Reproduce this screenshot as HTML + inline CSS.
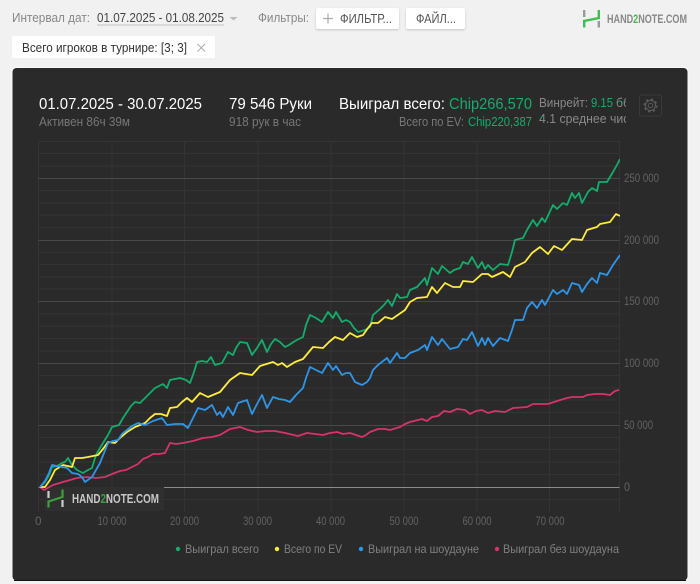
<!DOCTYPE html>
<html><head><meta charset="utf-8"><style>
html,body{margin:0;padding:0;width:700px;height:584px;overflow:hidden;background:#f1f1f1}
svg{display:block}
text{font-family:"Liberation Sans","Noto Sans CJK SC",sans-serif}
</style></head><body>
<svg width="700" height="584" viewBox="0 0 700 584" xmlns="http://www.w3.org/2000/svg">
<defs>
<filter id="s" x="-10%" y="-20%" width="120%" height="150%"><feDropShadow dx="0" dy="1" stdDeviation="1" flood-color="#000" flood-opacity=".18"/></filter>
<clipPath id="c1"><rect x="535" y="90" width="91" height="40"/></clipPath>
<clipPath id="c2"><rect x="30" y="135" width="590" height="380"/></clipPath>
</defs>
<rect width="700" height="584" fill="#f1f1f1"/>
<text x="12" y="22" font-size="13" fill="#888" textLength="78" lengthAdjust="spacingAndGlyphs">Интервал дат:</text>
<text x="97" y="22" font-size="13" fill="#444" textLength="127" lengthAdjust="spacingAndGlyphs">01.07.2025 - 01.08.2025</text>
<line x1="97" y1="25" x2="224" y2="25" stroke="#c4c4c4" stroke-width="1"/>
<path d="M229.500 17h8l-4 3.500z" fill="#bbb"/>
<text x="258" y="22" font-size="13" fill="#888" textLength="51" lengthAdjust="spacingAndGlyphs">Фильтры:</text>
<rect x="316" y="8" width="83" height="21" rx="2" fill="#fff" filter="url(#s)"/>
<path d="M328 13.500v10M323 18.500h10" stroke="#aaa" stroke-width="1.200"/>
<text x="340" y="23" font-size="13" fill="#555" textLength="52" lengthAdjust="spacingAndGlyphs">ФИЛЬТР...</text>
<rect x="406" y="8" width="59" height="21" rx="2" fill="#fff" filter="url(#s)"/>
<text x="416" y="23" font-size="13" fill="#555" textLength="40" lengthAdjust="spacingAndGlyphs">ФАЙЛ...</text>
<path d="M584.200 10v7M598.800 21v6.500" stroke="#999" stroke-width="2.400" fill="none"/>
<path d="M598.800 10v8l-14.600 3v6.500" stroke="#3fbf4f" stroke-width="2.400" fill="none"/>
<text x="607" y="23" font-size="11.500" font-weight="bold" fill="#888" textLength="80" lengthAdjust="spacingAndGlyphs">HAND<tspan fill="#4db54d">2</tspan>NOTE.COM</text>
<rect x="12" y="36" width="203" height="22" rx="2" fill="#fff"/>
<text x="22" y="52" font-size="13" fill="#333" textLength="165" lengthAdjust="spacingAndGlyphs">Всего игроков в турнире: [3; 3]</text>
<path d="M197.500 44l7.500 7.500M205 44l-7.500 7.500" stroke="#aaa" stroke-width="1"/>

<rect x="11.500" y="67" width="677" height="514.500" rx="4" fill="#fff" fill-opacity=".5"/>
<rect x="12.500" y="68" width="675" height="512.500" rx="4" fill="#2a2a2a"/>
<line x1="14" y1="580.500" x2="686" y2="580.500" stroke="#111" stroke-width="1"/>

<text x="39" y="109" font-size="16" fill="#fff" textLength="163" lengthAdjust="spacingAndGlyphs">01.07.2025 - 30.07.2025</text>
<text x="39" y="126" font-size="13" fill="#777" textLength="91" lengthAdjust="spacingAndGlyphs">Активен 86ч 39м</text>
<text x="229" y="109" font-size="16" fill="#fff" textLength="83" lengthAdjust="spacingAndGlyphs">79 546 Руки</text>
<text x="229" y="126" font-size="13" fill="#777" textLength="72" lengthAdjust="spacingAndGlyphs">918 рук в час</text>
<text x="339" y="109" font-size="16" fill="#fff" textLength="106" lengthAdjust="spacingAndGlyphs">Выиграл всего:</text>
<text x="449" y="109" font-size="16" fill="#14ad6c" textLength="83" lengthAdjust="spacingAndGlyphs">Chip266,570</text>
<text x="399" y="126" font-size="13" fill="#777" textLength="65" lengthAdjust="spacingAndGlyphs">Всего по EV:</text>
<text x="468" y="126" font-size="13" fill="#14ad6c" textLength="64" lengthAdjust="spacingAndGlyphs">Chip220,387</text>
<g clip-path="url(#c1)">
<text x="539" y="107" font-size="13" fill="#888" textLength="49" lengthAdjust="spacingAndGlyphs">Винрейт:</text>
<text x="591" y="107" font-size="13" fill="#14ad6c" textLength="22" lengthAdjust="spacingAndGlyphs">9.15</text>
<text x="616" y="107" font-size="13" fill="#888" textLength="14" lengthAdjust="spacingAndGlyphs">бб</text>
<text x="539" y="123" font-size="13" fill="#888" textLength="96" lengthAdjust="spacingAndGlyphs">4.1 среднее чист</text>
</g>
<rect x="639.500" y="95" width="22" height="21" rx="2" fill="none" stroke="#3a3a3a"/>
<circle cx="650.500" cy="105.500" r="2.300" fill="none" stroke="#5a5a5a" stroke-width="1"/>
<circle cx="650.500" cy="105.500" r="5" fill="none" stroke="#5a5a5a" stroke-width="1"/>
<circle cx="650.500" cy="105.500" r="6.200" fill="none" stroke="#5a5a5a" stroke-width="1.600" stroke-dasharray="2.400 2.470"/>

<g stroke="#343434" stroke-width="1" fill="none">
<path d="M38.500 141.500H619.500M38.500 153.500H619.500M38.500 166H619.500M38.500 190.500H619.500M38.500 203H619.500M38.500 215H619.500M38.500 227.500H619.500M38.500 252.500H619.500M38.500 264.500H619.500M38.500 277H619.500M38.500 289H619.500M38.500 314H619.500M38.500 326H619.500M38.500 338.500H619.500M38.500 351H619.500M38.500 375.500H619.500M38.500 388H619.500M38.500 400H619.500M38.500 412.500H619.500M38.500 437.500H619.500M38.500 449.500H619.500M38.500 462H619.500M38.500 474.500H619.500M38.500 499.500H619.500"/>
<path d="M38.500 141V511.500M112 141V511.500M184.500 141V511.500M258 141V511.500M331 141V511.500M404 141V511.500M477 141V511.500M549.500 141V511.500M619.500 141V511.500"/>
</g>
<g stroke="#484848" stroke-width="1" fill="none">
<path d="M38.500 178.500H619.500M38.500 240.500H619.500M38.500 301.500H619.500M38.500 363.500H619.500M38.500 425.500H619.500"/>
</g>
<path d="M38.500 487.500H619.500" stroke="#8a8a8a" stroke-width="1"/>

<rect x="45" y="487" width="119" height="24" fill="#2f2f2f"/>
<path d="M48.500 491v7M62.500 500v7" stroke="#ccc" stroke-width="2.200" fill="none"/>
<path d="M62.500 489.500v7.500l-14 4.500v6" stroke="#3f9f3f" stroke-width="2.200" fill="none"/>
<text x="72" y="503" font-size="12.500" font-weight="bold" fill="#c8c8c8" textLength="87" lengthAdjust="spacingAndGlyphs">HAND<tspan fill="#3f9f3f">2</tspan>NOTE.COM</text>

<g clip-path="url(#c2)" fill="none" stroke-width="1.800" stroke-linejoin="round">
<polyline stroke="#d6336c" points="40,487 44,490 53,485 63,482 70,480 77,478 87,477 96,478 105,477 112,474 120,471 126,470 132,467 138,464 143,459 148,457 153,454 159,454 165,453 168,447 170,443 176,444 183,443 193,441 203,438 212,437 220,435 225,432 230,429 240,427 248,430 257,432 266,431 275,431 285,433 298,436 307,433 315,434 323,435 330,433 337,432 343,434 350,433 356,435 362,437 366,435 370,432 378,429 385,429 390,430 400,427 405,424 410,422 422,419 427,421 432,417 438,416 444,411 450,412 457,409 465,410 470,414 476,411 482,410 488,413 495,411 505,412 513,408 527,407 533,404 548,404 557,401 567,398 572,397 583,397 587,395 595,394 603,394 610,395 615,391 619,390"/>
<polyline stroke="#14ad6c" points="40,487 45,482 49,475 52,467 57,466 62,463 65,462 68,458 72,465 77,470 83,473 88,470 92,468 95,458 97,453 103,443 108,435 112,427 119,425 123,418 127,412 131,406 135,402 140,403 145,398 150,393 155,388 163,384 167,388 170,380 180,378 186,380 190,383 194,372 197,362 202,361 207,362 211,357 215,365 222,363 228,352 233,355 236,348 240,342 247,343 252,355 257,348 262,340 267,352 271,344 275,339 280,342 285,347 289,345 295,341 303,337 306,325 310,315 316,318 322,322 328,312 333,318 336,312 342,322 346,320 350,322 354,328 358,332 365,330 370,327 373,315 380,309 384,305 388,300 392,306 397,294 400,298 407,297 410,290 417,287 425,278 427,285 432,268 438,274 442,266 450,273 454,270 460,268 463,262 468,264 472,257 478,268 482,262 485,269 488,265 493,270 500,264 508,265 512,252 515,240 523,238 527,230 533,220 537,226 542,218 545,222 553,205 557,209 563,203 567,205 572,193 575,198 579,193 582,203 588,192 592,188 597,191 599,182 607,182 613,172 618,163 620,159"/>
<polyline stroke="#ffec3d" points="40,487 45,487 50,480 55,470 63,465 72,467 75,458 82,458 88,457 98,455 103,449 108,442 115,443 121,437 127,432 135,427 145,423 150,418 155,414 161,414 167,416 170,408 177,407 182,402 187,398 192,402 200,393 208,397 220,392 225,386 230,380 240,373 252,375 260,366 273,362 278,365 282,363 287,367 295,362 303,359 308,353 313,347 323,348 329,342 335,337 343,340 350,333 357,337 363,335 368,328 372,323 378,323 385,317 392,319 405,310 410,302 417,298 427,297 432,287 437,293 445,283 453,287 460,287 463,281 473,282 482,274 488,274 492,277 503,272 510,277 515,267 525,262 532,253 540,247 548,254 554,246 562,250 572,239 582,240 587,230 597,227 600,224 610,222 616,214 620,216"/>
<polyline stroke="#2f95e8" points="40,487 45,481 49,473 52,465 57,466 62,467 67,468 72,473 78,474 82,477 85,482 92,477 96,470 100,463 104,453 108,443 113,441 118,440 122,434 127,430 132,426 138,423 145,425 153,421 162,418 167,425 175,424 183,424 188,428 193,418 198,408 205,410 212,405 217,415 220,412 223,417 228,407 233,415 238,403 247,400 252,414 257,404 262,395 267,408 273,397 279,399 285,400 290,402 296,395 303,388 306,378 310,367 316,370 322,373 328,363 333,370 336,366 342,375 346,373 350,373 355,382 362,385 367,382 370,378 373,370 378,365 387,358 390,363 397,353 400,358 405,358 410,353 418,350 425,345 427,350 432,337 438,345 442,339 450,349 458,347 463,339 467,340 472,332 478,346 482,338 485,345 488,338 493,346 500,338 508,341 512,330 515,320 523,320 527,308 532,302 537,308 542,300 545,305 553,290 557,294 563,290 567,294 572,283 579,285 582,292 587,284 592,278 597,283 600,273 607,275 613,265 620,255"/>
</g>

<g font-size="12" fill="#626262">
<text x="35" y="525" textLength="6.500" lengthAdjust="spacingAndGlyphs">0</text>
<text x="97.500" y="525" textLength="29" lengthAdjust="spacingAndGlyphs">10 000</text>
<text x="170" y="525" textLength="29" lengthAdjust="spacingAndGlyphs">20 000</text>
<text x="243" y="525" textLength="29" lengthAdjust="spacingAndGlyphs">30 000</text>
<text x="316" y="525" textLength="29" lengthAdjust="spacingAndGlyphs">40 000</text>
<text x="389.500" y="525" textLength="29" lengthAdjust="spacingAndGlyphs">50 000</text>
<text x="462.500" y="525" textLength="29" lengthAdjust="spacingAndGlyphs">60 000</text>
<text x="535.500" y="525" textLength="29" lengthAdjust="spacingAndGlyphs">70 000</text>
<text x="624" y="182" textLength="35" lengthAdjust="spacingAndGlyphs">250 000</text>
<text x="624" y="244" textLength="35" lengthAdjust="spacingAndGlyphs">200 000</text>
<text x="624" y="305" textLength="35" lengthAdjust="spacingAndGlyphs">150 000</text>
<text x="624" y="367" textLength="35" lengthAdjust="spacingAndGlyphs">100 000</text>
<text x="624" y="429" textLength="29" lengthAdjust="spacingAndGlyphs">50 000</text>
<text x="624" y="491" textLength="6" lengthAdjust="spacingAndGlyphs">0</text>
</g>

<circle cx="178" cy="549" r="2.200" fill="#14ad6c"/>
<circle cx="277" cy="549" r="2.200" fill="#ffec3d"/>
<circle cx="361" cy="549" r="2.200" fill="#2f95e8"/>
<circle cx="497" cy="549" r="2.200" fill="#d6336c"/>
<g font-size="12" fill="#808080">
<text x="185" y="553" textLength="74" lengthAdjust="spacingAndGlyphs">Выиграл всего</text>
<text x="284" y="553" textLength="58" lengthAdjust="spacingAndGlyphs">Всего по EV</text>
<text x="368" y="553" textLength="111" lengthAdjust="spacingAndGlyphs">Выиграл на шоудауне</text>
<text x="503" y="553" textLength="116" lengthAdjust="spacingAndGlyphs">Выиграл без шоудауна</text>
</g>
</svg>
</body></html>
